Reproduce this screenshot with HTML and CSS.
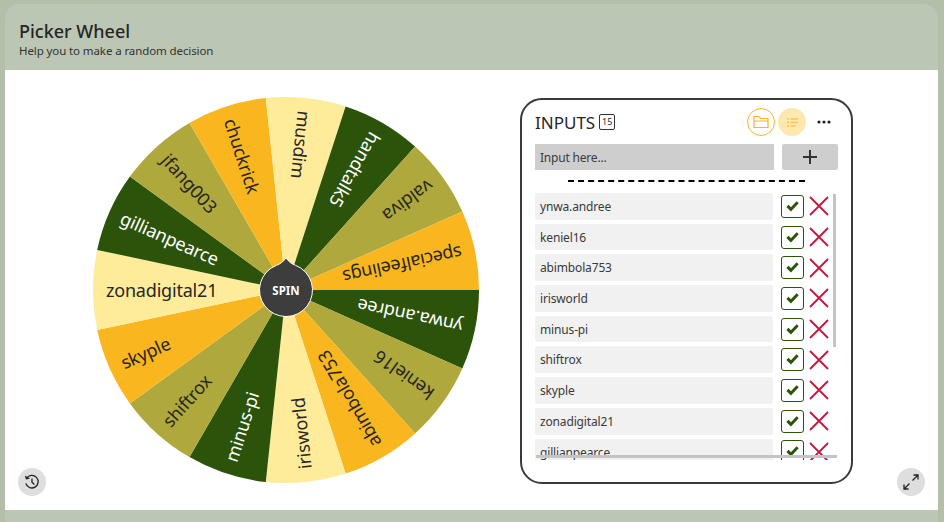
FILE: index.html
```html
<!DOCTYPE html>
<html lang="en">
<head>
<meta charset="UTF-8">
<meta name="viewport" content="width=device-width, initial-scale=1.0">
<title>Picker Wheel</title>
<link rel="stylesheet" href="styles.css">
</head>
<body>
<svg class="defs" width="0" height="0">
  <symbol id="tick" viewBox="0 0 16 16"><path d="M1.5 8.5 L3.8 6.2 L6.3 8.7 L12.4 2.3 L14.6 4.6 L6.3 13.2 Z"/></symbol>
  <symbol id="cross" viewBox="0 0 20 20"><path d="M1 1 L19 19 M19 1 L1 19"/></symbol>
</svg>
<div class="app">
  <header class="top">
    <h1>Picker Wheel</h1>
    <p>Help you to make a random decision</p>
  </header>
  <main class="stage">
    <svg class="wheel" viewBox="-193 -193 386 386" width="386" height="386">
      <path class="green" d="M0 0 L193 0 A193 193 0 0 1 176.3 78.5 Z"/>
      <path class="olive" d="M0 0 L176.3 78.5 A193 193 0 0 1 129.1 143.4 Z"/>
      <path class="orange" d="M0 0 L129.1 143.4 A193 193 0 0 1 59.6 183.6 Z"/>
      <path class="pale" d="M0 0 L59.6 183.6 A193 193 0 0 1 -20.2 192 Z"/>
      <path class="green" d="M0 0 L-20.2 192 A193 193 0 0 1 -96.5 167.1 Z"/>
      <path class="olive" d="M0 0 L-96.5 167.1 A193 193 0 0 1 -156.1 113.4 Z"/>
      <path class="orange" d="M0 0 L-156.1 113.4 A193 193 0 0 1 -188.8 40.1 Z"/>
      <path class="pale" d="M0 0 L-188.8 40.1 A193 193 0 0 1 -188.8 -40.1 Z"/>
      <path class="green" d="M0 0 L-188.8 -40.1 A193 193 0 0 1 -156.1 -113.4 Z"/>
      <path class="olive" d="M0 0 L-156.1 -113.4 A193 193 0 0 1 -96.5 -167.1 Z"/>
      <path class="orange" d="M0 0 L-96.5 -167.1 A193 193 0 0 1 -20.2 -192 Z"/>
      <path class="pale" d="M0 0 L-20.2 -192 A193 193 0 0 1 59.6 -183.6 Z"/>
      <path class="green" d="M0 0 L59.6 -183.6 A193 193 0 0 1 129.1 -143.4 Z"/>
      <path class="olive" d="M0 0 L129.1 -143.4 A193 193 0 0 1 176.3 -78.5 Z"/>
      <path class="orange" d="M0 0 L176.3 -78.5 A193 193 0 0 1 193 0 Z"/>

      <text class="light" x="-180" transform="rotate(192)">ynwa.andree</text>
      <text x="-180" transform="rotate(216)">keniel16</text>
      <text x="-180" transform="rotate(240)">abimbola753</text>
      <text x="-180" transform="rotate(264)">irisworld</text>
      <text class="light" x="-180" transform="rotate(288)">minus-pi</text>
      <text x="-180" transform="rotate(312)">shiftrox</text>
      <text x="-180" transform="rotate(336)">skyple</text>
      <text x="-180" transform="rotate(0)">zonadigital21</text>
      <text class="light" x="-180" transform="rotate(24)">gillianpearce</text>
      <text x="-180" transform="rotate(48)">jfang003</text>
      <text x="-180" transform="rotate(72)">chuckrick</text>
      <text x="-180" transform="rotate(96)">musdim</text>
      <text class="light" x="-180" transform="rotate(120)">handtalk5</text>
      <text x="-180" transform="rotate(144)">valdiva</text>
      <text x="-180" transform="rotate(168)">specialfeelings</text>

      <path class="hub" d="M0 -32 C3 -28 6 -26 9.5 -24.7 A26.5 26.5 0 1 1 -9.5 -24.7 C-6 -26 -3 -28 0 -32 Z"/>
      <text class="spin" text-anchor="middle">SPIN</text>
    </svg>

    <section class="panel">
      <div class="panel-head">
        <span class="panel-title">INPUTS</span>
        <span class="count">15</span>
        <span class="head-icons">
          <span class="circle outline">
            <svg width="16" height="14" viewBox="0 0 16 14"><path d="M1 12.5 V1.5 H6 L7.5 3.5 H15 V12.5 Z M1 6 H15"/></svg>
          </span>
          <span class="circle filled">
            <svg width="11" height="9" viewBox="0 0 11 9"><path d="M0 1 H2 M3.5 1 H11 M0 4.5 H2 M3.5 4.5 H11 M0 8 H2 M3.5 8 H8.5"/></svg>
          </span>
          <span class="more">
            <svg width="14" height="4" viewBox="0 0 14 4"><circle cx="2" cy="2" r="1.6"/><circle cx="7" cy="2" r="1.6"/><circle cx="12" cy="2" r="1.6"/></svg>
          </span>
        </span>
      </div>
      <div class="add-row">
        <div class="add-input">Input here...</div>
        <div class="add-btn">
          <svg width="14" height="14" viewBox="0 0 14 14"><path d="M7 0 V14 M0 7 H14"/></svg>
        </div>
      </div>
      <div class="dashes"></div>
      <div class="list-wrap">
        <ul class="list">
          <li><span class="name">ynwa.andree</span><span class="check"><svg><use href="#tick"/></svg></span><svg class="del"><use href="#cross"/></svg></li>
          <li><span class="name">keniel16</span><span class="check"><svg><use href="#tick"/></svg></span><svg class="del"><use href="#cross"/></svg></li>
          <li><span class="name">abimbola753</span><span class="check"><svg><use href="#tick"/></svg></span><svg class="del"><use href="#cross"/></svg></li>
          <li><span class="name">irisworld</span><span class="check"><svg><use href="#tick"/></svg></span><svg class="del"><use href="#cross"/></svg></li>
          <li><span class="name">minus-pi</span><span class="check"><svg><use href="#tick"/></svg></span><svg class="del"><use href="#cross"/></svg></li>
          <li><span class="name">shiftrox</span><span class="check"><svg><use href="#tick"/></svg></span><svg class="del"><use href="#cross"/></svg></li>
          <li><span class="name">skyple</span><span class="check"><svg><use href="#tick"/></svg></span><svg class="del"><use href="#cross"/></svg></li>
          <li><span class="name">zonadigital21</span><span class="check"><svg><use href="#tick"/></svg></span><svg class="del"><use href="#cross"/></svg></li>
          <li><span class="name">gillianpearce</span><span class="check"><svg><use href="#tick"/></svg></span><svg class="del"><use href="#cross"/></svg></li>
        </ul>
        <div class="thumb-v"></div>
        <div class="thumb-h"></div>
      </div>
    </section>

    <button class="round history">
      <svg width="16" height="16" viewBox="0 0 16 16"><path d="M2.6 4.2 A6.3 6.3 0 1 1 1.8 9.4 M1.6 1.8 L2.4 4.8 L5.4 4.2 M8 4.4 V8.2 L10.4 10.4"/></svg>
    </button>
    <button class="round expand">
      <svg width="16" height="16" viewBox="0 0 16 16"><path d="M9.5 6.5 L15 1 M10.5 1 H15 V5.5 M6.5 9.5 L1 15 M1 10.5 V15 H5.5"/></svg>
    </button>
  </main>
</div>
</body>
</html>
```

FILE: styles.css
```css
* {
  box-sizing: border-box;
}
body {
  margin: 0;
  height: 522px;
  overflow: hidden;
  background-color: #b3bfa9;
  font-family: "Noto Sans", "Open Sans", sans-serif;
  color: #2b2b2b;
}
.defs {
  position: absolute;
}
.app {
  margin: 4px 6px 0 5px;
  height: 518px;
  background-color: #bcc6b4;
  border-radius: 14px 14px 0 0;
}
.top {
  height: 66px;
  padding: 17px 14px 0;
}
.top h1 {
  margin: 0;
  font-size: 18px;
  line-height: 21px;
  font-weight: 500;
  color: #262626;
}
.top p {
  margin: 0;
  font-size: 11.5px;
  line-height: 17px;
  letter-spacing: -0.1px;
  color: #333;
}
.stage {
  position: relative;
  height: 440px;
  display: flex;
  align-items: flex-start;
  gap: 41px;
  padding: 27px 0 0 88px;
  background-color: #fff;
}
.wheel {
  flex: none;
  display: block;
}
.wheel .green { fill: #2b5309; }
.wheel .olive { fill: #afa83c; }
.wheel .orange { fill: #f9b61f; }
.wheel .pale { fill: #ffec9b; }
.wheel text {
  font-size: 18px;
  letter-spacing: -0.2px;
  fill: #262626;
  dominant-baseline: central;
}
.wheel text.light {
  fill: #fff;
}
.wheel .hub {
  fill: #3d3d3d;
  stroke: #fff;
  stroke-width: 1;
}
.wheel text.spin {
  font-size: 11.5px;
  font-weight: 700;
  letter-spacing: 0;
  fill: #fff;
}
.panel {
  flex: none;
  width: 333px;
  height: 386px;
  margin-top: 1px;
  padding: 8px 13px 0;
  border: 2px solid #3a3a3a;
  border-radius: 22px;
  background-color: #fff;
}
.panel-head {
  display: flex;
  align-items: center;
  height: 28px;
}
.panel-title {
  font-size: 17px;
  color: #262626;
}
.count {
  margin-left: 4px;
  width: 16px;
  height: 16px;
  border: 1px solid #333;
  border-radius: 2px;
  font-size: 9px;
  line-height: 14px;
  text-align: center;
}
.head-icons {
  margin-left: auto;
  display: flex;
  align-items: center;
  gap: 3px;
}
.circle {
  width: 28px;
  height: 28px;
  border-radius: 50%;
  display: flex;
  align-items: center;
  justify-content: center;
}
.circle path {
  fill: none;
  stroke: #f9b61f;
  stroke-width: 1.2;
}
.circle.outline {
  border: 1px solid #f9b61f;
}
.circle.filled {
  background-color: #fde9b0;
}
.circle.filled path {
  stroke: #f9c64a;
  stroke-width: 1.7;
}
.more {
  width: 28px;
  margin-left: 1px;
  display: flex;
  justify-content: center;
}
.more svg {
  fill: #222;
}
.add-row {
  display: flex;
  gap: 8px;
  margin-top: 8px;
}
.add-input {
  width: 239px;
  height: 26px;
  padding-left: 5px;
  background-color: #cecece;
  font-size: 12px;
  line-height: 27px;
  letter-spacing: -0.2px;
  color: #3c3c3c;
}
.add-btn {
  width: 56px;
  height: 26px;
  background-color: #cecece;
  border-radius: 2px;
  display: flex;
  align-items: center;
  justify-content: center;
}
.add-btn path {
  stroke: #333;
  stroke-width: 2;
}
.dashes {
  width: 237px;
  margin: 10px 0 0 33px;
  border-top: 2px dashed #000;
}
.list-wrap {
  position: relative;
  height: 267px;
  margin-top: 11px;
  overflow: hidden;
}
.list {
  margin: 0;
  padding: 0;
  list-style: none;
  display: flex;
  flex-direction: column;
  gap: 4px;
}
.list li {
  flex: none;
  display: flex;
  align-items: center;
  height: 26.7px;
}
.name {
  width: 238px;
  height: 100%;
  padding-left: 5px;
  background-color: #f1f1f1;
  border-radius: 2px;
  font-size: 12px;
  line-height: 28px;
  letter-spacing: -0.15px;
  color: #3a3a3a;
}
.check {
  margin-left: 8px;
  width: 23px;
  height: 23px;
  border: 1px solid #2b5309;
  border-radius: 3px;
  display: flex;
  align-items: center;
  justify-content: center;
}
.check svg {
  width: 15px;
  height: 15px;
  fill: #2b5309;
}
.del {
  margin-left: 4.5px;
  width: 20px;
  height: 20px;
  fill: none;
  stroke: #c8143c;
  stroke-width: 1.8;
}
.thumb-v {
  position: absolute;
  top: 1px;
  right: 2px;
  width: 3px;
  height: 153px;
  background-color: #c4c4c4;
}
.thumb-h {
  position: absolute;
  left: 1px;
  right: 1px;
  bottom: 2px;
  height: 3px;
  background-color: #c4c4c4;
}
.round {
  position: absolute;
  bottom: 14px;
  width: 28px;
  height: 28px;
  padding: 0;
  border: none;
  border-radius: 50%;
  background-color: #dedede;
  display: flex;
  align-items: center;
  justify-content: center;
}
.round path {
  fill: none;
  stroke: #222;
  stroke-width: 1.3;
}
.history {
  left: 13px;
}
.expand {
  right: 13px;
}
```
